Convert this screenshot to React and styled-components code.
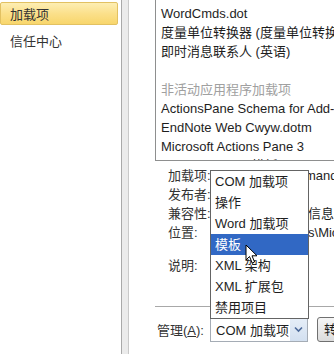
import styled, { createGlobalStyle } from "styled-components";

const GlobalStyle = createGlobalStyle`
  html, body {
    margin: 0;
    padding: 0;
    background: #fff;
  }
  body {
    font-family: "Liberation Sans", "Noto Sans CJK SC", sans-serif;
    font-size: 13px;
    color: #1e1e1e;
  }
`;

const Window = styled.div`
  position: relative;
  display: flex;
  width: 334px;
  height: 354px;
  overflow: hidden;
  background: #fff;
`;

const Sidebar = styled.div`
  width: 121px;
  flex-shrink: 0;
  padding-top: 2px;
  display: flex;
  flex-direction: column;
`;

const NavItem = styled.div`
  height: 23px;
  width: 118px;
  box-sizing: border-box;
  display: flex;
  align-items: center;
  padding-left: 9px;
  margin-bottom: 4px;
  font-size: 13px;
  color: #333;
  border-radius: 2px;
  border: 1px solid ${(p) => (p.$active ? "#e2c162" : "transparent")};
  background: ${(p) =>
    p.$active ? "linear-gradient(#fdeeb3, #fbe08b 50%, #f8d66c)" : "none"};
`;

const Divider = styled.div`
  width: 6px;
  flex-shrink: 0;
  background: #ebebeb;
  border-left: 1px solid #a9a9a9;
  border-right: 1px solid #c9c9c9;
`;

const Main = styled.div`
  flex: 1;
  display: flex;
  flex-direction: column;
  align-items: flex-start;
  padding-left: 26px;
  min-width: 0;
`;

const ListBox = styled.div`
  width: 260px;
  height: 164px;
  flex-shrink: 0;
  margin-top: -3px;
  box-sizing: border-box;
  border: 1px solid #8e8f8f;
  padding: 6px 0 0 5px;
  overflow: hidden;
  white-space: nowrap;
`;

const ListRow = styled.div`
  height: 19px;
  line-height: 19px;
  color: ${(p) => (p.$muted ? "#a0a0a0" : "#1e1e1e")};
`;

const Details = styled.div`
  display: flex;
  flex-direction: column;
  padding: 5px 0 0 13px;
  white-space: nowrap;
`;

const DetailRow = styled.div`
  display: flex;
  height: 19px;
  line-height: 19px;
  margin-top: ${(p) => p.$gap || 0}px;
`;

const Label = styled.div`
  width: 75px;
  flex-shrink: 0;
  color: #333;
`;

const Separator = styled.div`
  align-self: stretch;
  height: 1px;
  background: #a8a8a8;
  margin: 31px 0 10px 0;
`;

const ManageRow = styled.div`
  display: flex;
  align-items: center;
  white-space: nowrap;
  padding-left: 2px;
`;

const ManageLabel = styled.span`
  width: 53px;
  color: #333;
  u {
    text-decoration: underline;
  }
`;

const Select = styled.div`
  width: 98px;
  height: 25px;
  box-sizing: border-box;
  border: 1px solid #a5acb5;
  display: flex;
  align-items: center;
  padding-left: 5px;
`;

const SelectText = styled.span`
  flex: 1;
`;

const Arrow = styled.span`
  width: 17px;
  height: 23px;
  display: flex;
  align-items: center;
  justify-content: center;
  background: linear-gradient(#e6eef8, #d3e0f0);
`;

const GoButton = styled.div`
  margin-left: 9px;
  width: 80px;
  height: 25px;
  box-sizing: border-box;
  border: 1px solid #707070;
  border-radius: 3px;
  background: linear-gradient(#f6f6f6, #dcdcdc);
  padding-left: 6px;
  line-height: 23px;
`;

const Menu = styled.div`
  position: absolute;
  left: 210px;
  top: 170px;
  width: 99px;
  box-sizing: border-box;
  border: 1px solid #646464;
  background: #fff;
`;

const MenuItem = styled.div`
  height: 21px;
  line-height: 21px;
  padding-left: 4px;
  color: ${(p) => (p.$selected ? "#fff" : "#1e1e1e")};
  background: ${(p) => (p.$selected ? "#3168c4" : "transparent")};
`;

const Cursor = styled.svg`
  position: absolute;
  left: 245px;
  top: 244px;
`;

const listItems = [
  { text: "WordCmds.dot" },
  { text: "度量单位转换器 (度量单位转换器)" },
  { text: "即时消息联系人 (英语)" },
  { text: "\u00a0" },
  { text: "非活动应用程序加载项", muted: true },
  { text: "ActionsPane Schema for Add-Ins" },
  { text: "EndNote Web Cwyw.dotm" },
  { text: "Microsoft Actions Pane 3" },
  { text: "Microsoft Word 模板" },
];

const details = [
  { label: "加载项:", value: "Word Commands" },
  { label: "发布者:", value: "" },
  { label: "兼容性:", value: "没有兼容性信息" },
  { label: "位置:", value: "A\\Templates\\Microsoft" },
  { label: "说明:", value: "", gap: 14 },
];

const menuItems = ["COM 加载项", "操作", "Word 加载项", "模板", "XML 架构", "XML 扩展包", "禁用项目"];

export default function App() {
  return (
    <>
      <GlobalStyle />
      <Window>
        <Sidebar>
          <NavItem $active>加载项</NavItem>
          <NavItem>信任中心</NavItem>
        </Sidebar>
        <Divider />
        <Main>
          <ListBox>
            {listItems.map((item, i) => (
              <ListRow key={i} $muted={item.muted}>
                {item.text}
              </ListRow>
            ))}
          </ListBox>
          <Details>
            {details.map((d) => (
              <DetailRow key={d.label} $gap={d.gap}>
                <Label>{d.label}</Label>
                <span>{d.value}</span>
              </DetailRow>
            ))}
          </Details>
          <Separator />
          <ManageRow>
            <ManageLabel>
              管理(<u>A</u>):
            </ManageLabel>
            <Select>
              <SelectText>COM 加载项</SelectText>
              <Arrow>
                <svg width="9" height="7" viewBox="0 0 9 7">
                  <path d="M1 1.5 L4.5 5 L8 1.5" fill="none" stroke="#4d6a9a" strokeWidth="1.6" />
                </svg>
              </Arrow>
            </Select>
            <GoButton>转到(G)...</GoButton>
          </ManageRow>
        </Main>
        <Menu>
          {menuItems.map((m) => (
            <MenuItem key={m} $selected={m === "模板"}>
              {m}
            </MenuItem>
          ))}
        </Menu>
        <Cursor width="14" height="21" viewBox="0 0 14 21">
          <path
            d="M1 1 L1 16 L4.5 12.5 L7.2 19 L9.6 18 L7 11.8 L12 11.8 Z"
            fill="#fff"
            stroke="#000"
            strokeWidth="1"
          />
        </Cursor>
      </Window>
    </>
  );
}
